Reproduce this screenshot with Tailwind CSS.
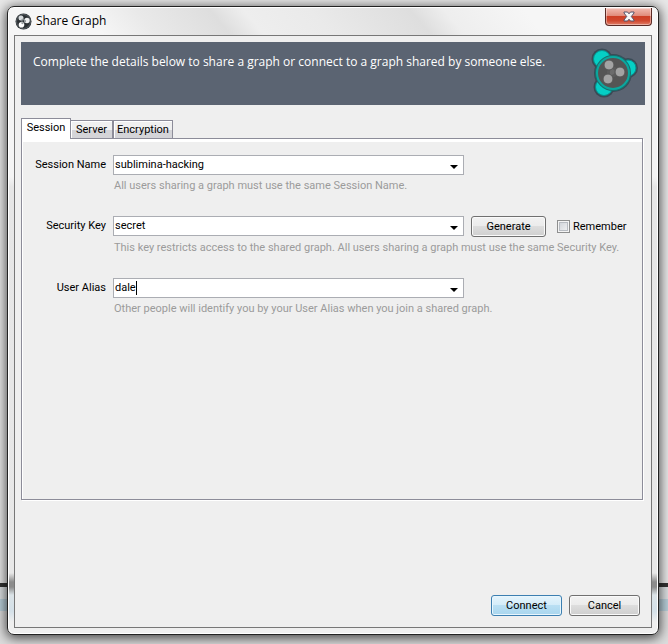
<!DOCTYPE html>
<html lang="en">
<head>
  <meta charset="UTF-8">
  <meta name="viewport" content="width=device-width, initial-scale=1.0">
  <title>Share Graph</title>
  <script src="https://cdn.jsdelivr.net/npm/@tailwindcss/browser@4"></script>
</head>
<body class="min-h-screen flex pt-[6px] pr-[9px] pb-[9px] pl-[7px] overflow-hidden text-[11px] leading-4 text-black font-['Roboto',sans-serif] bg-[linear-gradient(to_bottom,#e8e8e8_583px,#333_583px,#333_587px,#dce0e2_587px,#dce0e2_599px,#b9cfda_599px,#b9cfda_611px,#dcdcdc_611px)]">
  <!-- Dialog window -->
  <div class="flex-1 flex flex-col rounded-[7px] border border-[#222] px-[6px] pb-[6px] shadow-[0_2px_12px_1px_rgba(0,0,0,0.7),inset_0_0_0_1px_#fff] bg-[linear-gradient(to_bottom,#f4f4f4_0px,#f4f4f4_170px,#e6e6e6_180px,#e8e8e8_566px,#8c8c8c_575px,#8c8c8c_580px,#dbe3e7_588px,#d4e0e8_604px,#efefef_615px)]">
    <header class="flex items-start justify-between h-[27px] -mx-1 px-1 mt-px bg-[linear-gradient(50deg,#f6f6f6_14%,#e9e9e9_22%,#dedede_33%,#eeeeee_38%,#eaeaea_48%,#dedede_63%,#eeeeee_68%,#f6f6f6_80%)]">
      <div class="flex items-center gap-1 h-[26px] pl-px">
        <svg class="w-[17px] h-[17px]" viewBox="0 0 17 17" aria-hidden="true">
          <circle cx="8.5" cy="8.5" r="8" fill="#2b3033"/>
          <circle cx="8.5" cy="8.5" r="7" fill="none" stroke="#596064" stroke-width="1"/>
          <circle cx="6" cy="5" r="2.500" fill="#d8dcde"/>
          <circle cx="12" cy="7.500" r="2.700" fill="#f1f2f2"/>
          <circle cx="6.500" cy="11.700" r="2.800" fill="#fff"/>
          <path d="M7 6v5M7 6l4 2M7 11l4-3" stroke="#8f9598" stroke-width="1"/>
        </svg>
        <h1 class="text-[12px] font-['Open_Sans',sans-serif]">Share Graph</h1>
      </div>
      <button type="button" aria-label="Close" class="flex items-center justify-center w-[47px] h-[18px] rounded-b-[4px] border border-t-0 border-[#5b2a25] shadow-[inset_0_0_0_1px_rgba(255,255,255,0.4)] bg-[linear-gradient(to_bottom,#f3bdb3,#e08b7b_46%,#cd3f26_50%,#d0482f_75%,#e0806a)]">
        <svg class="w-[12px] h-[11px]" viewBox="0 0 12 11" aria-hidden="true">
          <path d="M1 1h3.500L6 2.800 7.500 1H11v1L8.300 5.500 11 9v1H7.500L6 8.200 4.500 10H1V9l2.700-3.500L1 2z" fill="#f6f6f6" stroke="#55536b" stroke-width="1"/>
        </svg>
      </button>
    </header>

    <main class="flex-1 flex flex-col border border-[#777] bg-[#efefef] px-[6px] pt-[6px] pb-[11px]">
      <!-- Banner -->
      <section class="flex items-start justify-between h-[63px] pl-3 pr-[6px] pt-[6px] bg-[#5b6472] text-white">
        <p class="pt-[6px] text-[12px] leading-4 font-['Open_Sans',sans-serif]">Complete the details below to share a graph or connect to a graph shared by someone else.</p>
        <svg class="w-[48px] h-[50px] shrink-0" viewBox="0 0 48 50" aria-hidden="true">
          <g fill="#253b44" opacity="0.6">
            <circle cx="11" cy="11" r="10.500"/>
            <circle cx="37" cy="20" r="10"/>
            <circle cx="13" cy="39" r="10.500"/>
            <circle cx="22" cy="25" r="19"/>
          </g>
          <g fill="#05cfc5" stroke="#078d8c" stroke-width="1">
            <circle cx="11" cy="11" r="8.500"/>
            <circle cx="37" cy="20" r="8"/>
            <circle cx="13" cy="39" r="8.500"/>
          </g>
          <circle cx="22" cy="25" r="18" fill="#17706f"/>
          <circle cx="22" cy="25" r="16" fill="#555" stroke="#0ba79e" stroke-width="2"/>
          <path d="M18 17l11 7-12 7z" fill="#6c6c6c" stroke="#5c5c5c" stroke-width="3"/>
          <g fill="#a3a3a3" stroke="#555" stroke-width="1">
            <circle cx="18" cy="17" r="5"/>
            <circle cx="29" cy="24" r="5"/>
            <circle cx="17" cy="31" r="5"/>
          </g>
        </svg>
      </section>

      <!-- Tabs -->
      <div role="tablist" class="relative flex items-end mt-[13px] -mb-px">
        <button type="button" role="tab" aria-selected="true" class="h-[21px] w-[50px] pb-[2px] border border-b-0 border-[#8c8c99] bg-white">Session</button>
        <button type="button" role="tab" aria-selected="false" class="h-[19px] w-[42px] border border-l-0 border-[#8c8c99] shadow-[inset_1px_1px_0_#fff] bg-[linear-gradient(to_bottom,#f0f0f0_50%,#d4d4d8_55%)]">Server</button>
        <button type="button" role="tab" aria-selected="false" class="h-[19px] w-[60px] border border-[#8c8c99] shadow-[inset_1px_1px_0_#fff] bg-[linear-gradient(to_bottom,#f0f0f0_50%,#d4d4d8_55%)]">Encryption</button>
      </div>

      <form id="session" class="flex flex-col flex-1">
        <div class="h-[362px] mr-[2px] border border-[#8c8c99] pt-4 pl-[6px] pr-[18px] shadow-[inset_1px_3px_0_#fff,1px_1px_0_#fff]">
          <div class="grid grid-cols-[78px_1fr_153px] gap-x-[7px] items-start">
            <label for="sessionName" class="text-right leading-5">Session Name</label>
            <div class="flex h-5 border border-[#abadb3] bg-white">
              <input id="sessionName" type="text" value="sublimina-hacking" class="flex-1 min-w-0 px-px outline-none">
              <button type="button" aria-label="Show session names" class="w-[18px] pt-1 flex items-center justify-center">
                <svg class="w-[8px] h-[4px]" viewBox="0 0 8 4" aria-hidden="true"><path d="M0 0h8L4 4z"/></svg>
              </button>
            </div>
            <p class="col-start-2 col-span-2 mt-[3px] mb-[22px] pl-px text-[#9b9b9b] whitespace-nowrap">All users sharing a graph must use the same Session Name.</p>

            <label for="securityKey" class="col-start-1 text-right leading-5">Security Key</label>
            <div class="flex h-5 border border-[#abadb3] bg-white">
              <input id="securityKey" type="text" value="secret" class="flex-1 min-w-0 px-px outline-none">
              <button type="button" aria-label="Show security keys" class="w-[18px] pt-1 flex items-center justify-center">
                <svg class="w-[8px] h-[4px]" viewBox="0 0 8 4" aria-hidden="true"><path d="M0 0h8L4 4z"/></svg>
              </button>
            </div>
            <div class="flex items-center">
              <button type="button" class="w-[75px] h-[21px] shrink-0 rounded-[3px] border border-[#707070] shadow-[inset_0_0_0_1px_#fafafa] bg-[linear-gradient(to_bottom,#f2f2f2,#ebebeb_49%,#dddddd_50%,#cfcfcf)]">Generate</button>
              <input id="remember" type="checkbox" class="appearance-none ml-[11px] w-[13px] h-[13px] shrink-0 border border-[#8e8f8f] shadow-[inset_0_0_0_1px_#f4f4f4,inset_0_0_0_2px_#b8bcc2] bg-[linear-gradient(135deg,#cbcfd5,#f6f6f6)]">
              <label for="remember" class="ml-[3px]">Remember</label>
            </div>
            <p class="col-start-2 col-span-2 mt-[3px] mb-[22px] pl-px text-[#9b9b9b] whitespace-nowrap">This key restricts access to the shared graph. All users sharing a graph must use the same Security Key.</p>

            <label for="userAlias" class="col-start-1 text-right leading-5">User Alias</label>
            <div class="relative flex h-5 border border-[#abadb3] bg-white">
              <input id="userAlias" type="text" value="dale" class="flex-1 min-w-0 px-px outline-none">
              <!-- Text cursor -->
              <span class="absolute left-[22px] top-[2px] w-px h-[14px] bg-black"></span>
              <button type="button" aria-label="Show user aliases" class="w-[18px] pt-1 flex items-center justify-center">
                <svg class="w-[8px] h-[4px]" viewBox="0 0 8 4" aria-hidden="true"><path d="M0 0h8L4 4z"/></svg>
              </button>
            </div>
            <p class="col-start-2 col-span-2 mt-[3px] pl-px text-[#9b9b9b] whitespace-nowrap">Other people will identify you by your User Alias when you join a shared graph.</p>
          </div>
        </div>

        <div class="flex justify-end gap-[7px] mt-auto pr-[5px]">
          <button type="submit" class="w-[71px] h-[21px] rounded-[3px] border border-[#3c7fb1] shadow-[inset_0_0_0_1px_#e8f6fd] bg-[linear-gradient(to_bottom,#e5f4fc,#d3ecf9_49%,#b9dff3_50%,#a9d6ee)]">Connect</button>
          <button type="button" class="w-[71px] h-[21px] rounded-[3px] border border-[#707070] shadow-[inset_0_0_0_1px_#fafafa] bg-[linear-gradient(to_bottom,#f2f2f2,#ebebeb_49%,#dddddd_50%,#cfcfcf)]">Cancel</button>
        </div>
      </form>
    </main>
  </div>
</body>
</html>
